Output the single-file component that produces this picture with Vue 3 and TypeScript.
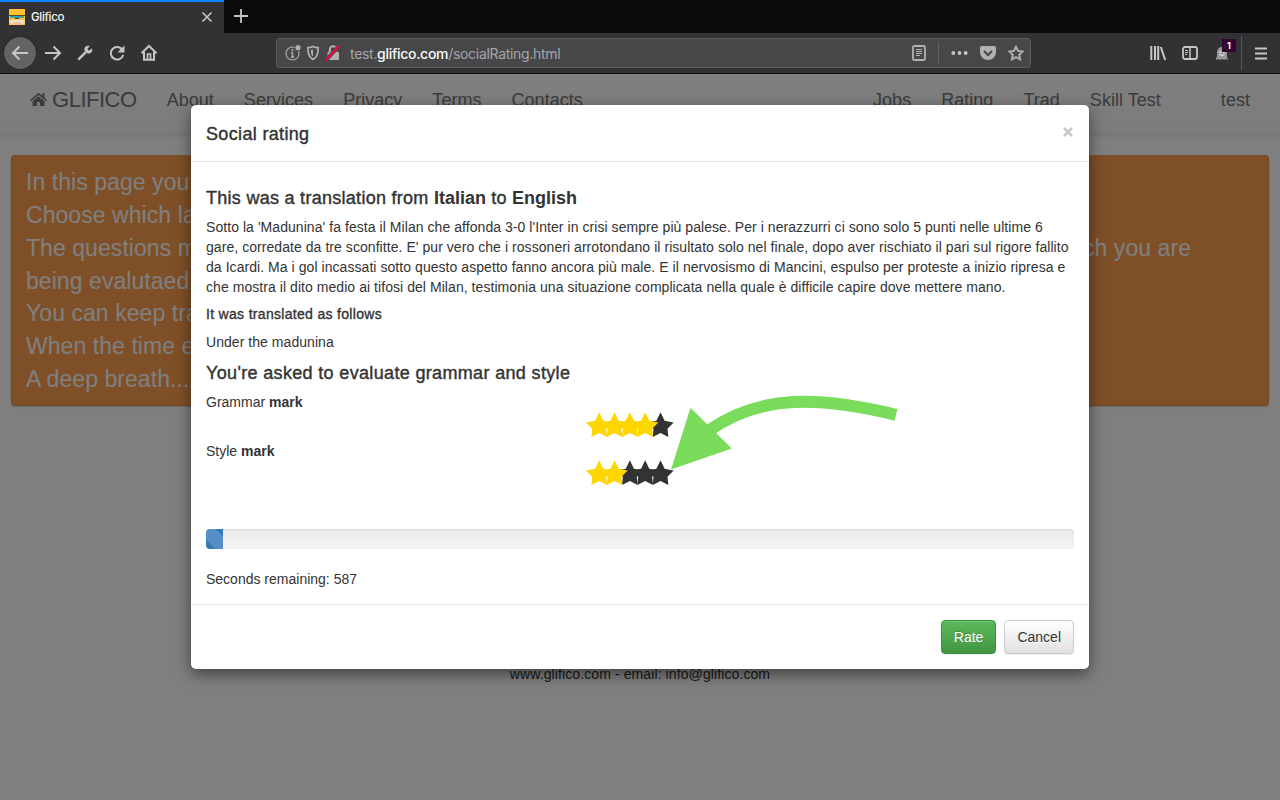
<script setup lang="ts">
interface Rating { label: string; value: number }

const leftLinks: string[] = ['About', 'Services', 'Privacy', 'Terms', 'Contacts']
const rightLinks: string[] = ['Jobs', 'Rating', 'Trad', 'Skill Test']
const ratings: Rating[] = [
  { label: 'Grammar', value: 4 },
  { label: 'Style', value: 2 },
]
const intro: string[][] = [
  ['In this page you'],
  ['Choose which la'],
  ['The questions m', 'ch you are'],
  ['being evalutaed'],
  ['You can keep tra'],
  ['When the time e'],
  ['A deep breath...'],
]
const progress = 2
// Unfilled stars come first so the gold ones overlap them.
const starOrder = [5, 4, 3, 2, 1]
</script>

<template>
  <div class="window">
    <header class="chrome">
      <div class="tabs">
        <div class="tab">
          <svg class="favicon" width="16" height="16" viewBox="0 0 16 16">
            <rect width="16" height="16" fill="#ffc233" />
            <rect y="6" width="16" height="1" fill="#594a25" />
            <rect x="1" y="7" width="14" height="2" fill="#35a39b" />
            <rect x="6" y="9" width="4" height="1" fill="#3b3024" />
            <path d="M0 12l2-1h4l2-1 2 1h4l2 1v2l-3 1H3l-3-2z" fill="#f2dfc9" />
            <rect x="4" y="13" width="8" height="3" fill="#f5bd9e" />
          </svg>
          <span class="tab-title">Glifico</span>
          <svg class="tab-close" width="12" height="12" viewBox="0 0 12 12"><path d="M1.500 1.500l9 9M10.500 1.500l-9 9" /></svg>
        </div>
        <svg class="new-tab" width="16" height="16" viewBox="0 0 16 16"><path d="M8 1v14M1 8h14" /></svg>
      </div>
      <div class="toolbar">
        <div class="nav-icons">
          <span class="back"><svg width="18" height="18" viewBox="0 0 18 18"><path d="M17 9H2M8.500 2.500L2 9l6.500 6.500" /></svg></span>
          <svg width="18" height="18" viewBox="0 0 18 18"><path d="M1 9h15M9.500 2.500L16 9l-6.500 6.500" /></svg>
          <svg width="18" height="18" viewBox="0 0 18 18"><path d="M2.300 15.700l7.500-7.500" stroke-width="2.400" /><path d="M13.800 2c-3.900-.8-6 1.500-5.100 4.900l2.400 2.400c3.600 1 5.800-1.200 4.900-5l-2.800 2.500-1.900-1.800z" fill="#c6c6c7" stroke="none" /></svg>
          <svg width="18" height="18" viewBox="0 0 18 18"><path d="M14.300 5.600A6.300 6.300 0 1 0 15.200 11" /><path d="M16.500 1.500v7h-7z" fill="#c6c6c7" stroke="none" /></svg>
          <svg width="18" height="18" viewBox="0 0 18 18"><path d="M1.500 9.200L9 2l7.500 7.200M4 8v7.800h10V8" /><path d="M7.500 15v-5h3v5" stroke-width="1.700" /></svg>
        </div>
        <div class="urlbar">
          <svg width="17" height="18" viewBox="0 0 17 18"><circle cx="7.500" cy="9.500" r="6.500" stroke-width="1.100" /><path d="M7.500 8.500v4.500M6 8.500h1.500M6 13h3.200" stroke-width="1.400" /><circle cx="7.500" cy="6" r="1.100" fill="#b1b1b3" stroke="none" /><circle cx="13" cy="3.700" r="3.200" fill="#b1b1b3" stroke="#474749" stroke-width="1" /></svg>
          <svg width="14" height="16" viewBox="0 0 14 16"><path d="M7 1.500c-1.700 1-3.300 1.200-5.200 1.200 0 5.500.7 9.300 5.200 11.800 4.500-2.500 5.200-6.300 5.200-11.800C10.300 2.700 8.700 2.500 7 1.500z" stroke-width="1.700" /><path d="M7 4.500c-1 .5-1.400.6-2.300.7.200 3.200.7 5 2.300 6.300z" fill="#b1b1b3" stroke="none" /></svg>
          <svg class="lock" width="16" height="18" viewBox="0 0 16 18"><path d="M4.800 8V5.500a3.200 3.200 0 0 1 6.400 0V8" stroke-width="2" /><rect x="2.500" y="8" width="11.500" height="8" rx="1" fill="#b1b1b3" stroke="none" /><path d="M1 16L14 2" stroke="#474749" stroke-width="4" /><path d="M1 16L14 2" stroke="#f7063d" stroke-width="2" /></svg>
          <span class="url">test.<b>glifico.com</b>/socialRating.html</span>
          <div class="page-actions">
            <svg width="14" height="16" viewBox="0 0 14 16"><rect x="1" y="1" width="12" height="14" rx="1.500" stroke-width="1.800" /><path d="M4 4.500h6M4 6.500h6M4 8.500h6M4 10.500h4" stroke-width="1" /></svg>
            <i class="separator"></i>
            <svg width="17" height="4" viewBox="0 0 17 4"><g fill="#c6c6c7" stroke="none"><circle cx="2.300" cy="2" r="1.900" /><circle cx="8.500" cy="2" r="1.900" /><circle cx="14.700" cy="2" r="1.900" /></g></svg>
            <svg width="16" height="16" viewBox="0 0 16 16"><path d="M2 1h12a2 2 0 0 1 2 2v4a8 8 0 0 1-16 0V3a2 2 0 0 1 2-2z" fill="#b1b1b3" stroke="none" /><path class="chevron" d="M4 6l4 4 4-4" /></svg>
            <svg width="16" height="16" viewBox="0 0 16 16"><path d="M8 1.600l2 4.300 4.700.6-3.500 3.200.9 4.700L8 12.100l-4.100 2.300.9-4.700-3.500-3.200 4.700-.6z" stroke-width="1.900" /></svg>
          </div>
        </div>
        <div class="extras">
          <svg width="16" height="16" viewBox="0 0 16 16"><path d="M1.300 1v14M5 1v14M8.200 1v14M10.800 2l4.400 13" /></svg>
          <svg width="16" height="16" viewBox="0 0 16 16"><rect x="1" y="2" width="14" height="12" rx="2" stroke-width="1.800" /><path d="M8 2v12" stroke-width="1.500" /><path d="M3 5.500h3M3 7.500h3M3 9.500h2" stroke-width="1" /></svg>
          <span class="ghost">
            <svg width="16" height="16" viewBox="0 0 16 16"><path d="M2 15V13l1-1V7a5 5 0 0 1 10 0v5l1 2v1l-2-1-2 1-2-1-2 1-2-1z" fill="#98989a" stroke="none" /><circle cx="6.300" cy="7" r="1" fill="#eee" stroke="none" /><circle cx="9.800" cy="7" r="1" fill="#eee" stroke="none" /><path d="M5.500 9.500q2.500 2 5 0" stroke="#eee" stroke-width="1" /></svg>
            <span class="count">1</span>
          </span>
          <i class="divider"></i>
          <svg class="menu" width="12" height="13" viewBox="0 0 12 13"><path d="M0 1.500h12M0 6.500h12M0 11.500h12" /></svg>
        </div>
      </div>
    </header>

    <main class="page">
      <nav class="navbar">
        <a class="brand">
          <svg width="17" height="15" viewBox="0 0 17 15"><path d="M8.500.7L0 8l1 1.300L8.500 3l7.500 6.300L17 8l-2.500-2.200V1.300h-2.300v2.500zM8.500 4.200l-6 5V14h4.600v-4h2.800v4h4.600V9.200z" /></svg>
          <span>GLIFICO</span>
        </a>
        <a v-for="l in leftLinks" :key="l">{{ l }}</a>
        <div class="nav-right">
          <a v-for="l in rightLinks" :key="l">{{ l }}</a>
          <a class="user">test</a>
        </div>
      </nav>
      <section class="intro">
        <div v-for="(line, i) in intro" :key="i" class="intro-line"><span v-for="part in line" :key="part">{{ part }}</span></div>
      </section>
      <footer class="page-footer">www.glifico.com - email: info@glifico.com</footer>

      <div class="backdrop">
        <div class="modal">
          <div class="modal-header">
            <h4>Social rating</h4>
            <svg width="10" height="10" viewBox="0 0 10 10"><path d="M1 1l8 8M9 1L1 9" /></svg>
          </div>
          <div class="modal-body">
            <h4 class="direction">This was a translation from <b>Italian</b> to <b>English</b></h4>
            <p class="source">
              <span>Sotto la 'Madunina' fa festa il Milan che affonda 3-0 l'Inter in crisi sempre più palese. Per i nerazzurri ci sono solo 5 punti nelle ultime 6</span>
              <span>gare, corredate da tre sconfitte. E' pur vero che i rossoneri arrotondano il risultato solo nel finale, dopo aver rischiato il pari sul rigore fallito</span>
              <span>da Icardi. Ma i gol incassati sotto questo aspetto fanno ancora più male. E il nervosismo di Mancini, espulso per proteste a inizio ripresa e</span>
              <span>che mostra il dito medio ai tifosi del Milan, testimonia una situazione complicata nella quale è difficile capire dove mettere mano.</span>
            </p>
            <h5>It was translated as follows</h5>
            <p class="translated">Under the madunina</p>
            <h4 class="ask">You're asked to evaluate grammar and style</h4>
            <div v-for="r in ratings" :key="r.label" class="rating">
              <div class="rating-label">{{ r.label }} <b>mark</b></div>
              <svg class="stars" width="88" height="26" viewBox="0 0 88 26">
                <path v-for="n in starOrder" :key="n" :class="{ on: n <= r.value }" :transform="`translate(${(n - 1) * 15.33} 0)`" d="M13.200.3L17.300 8.800L26.300 10.500L20.200 16.800L21 25L13.200 21.100L5.400 25L6.200 16.800L.1 10.500L9.100 8.800Z" />
              </svg>
            </div>
            <div class="progress"><div class="bar" :style="{ width: progress + '%' }"></div></div>
            <p class="remaining">Seconds remaining: 587</p>
          </div>
          <div class="modal-footer">
            <button class="rate">Rate</button>
            <button>Cancel</button>
          </div>
          <svg class="arrow" width="230" height="80" viewBox="670 392 230 80">
            <path d="M709 430.500C760 394 820 396.500 896 414.800" fill="none" stroke="#79dc5b" stroke-width="12" />
            <path d="M671 469.500L690.500 407.800L731.800 448.600Z" fill="#79dc5b" />
          </svg>
        </div>
      </div>
    </main>
  </div>
</template>

<style>
body { margin: 0; overflow: hidden; }
</style>

<style scoped>
.window { width: 1280px; height: 800px; display: flex; flex-direction: column; font: 14px/20px "Liberation Sans", Arial, sans-serif; color: #333; }
h4, h5, p { margin: 0; }
.chrome svg { fill: none; stroke: #c6c6c7; stroke-width: 2; flex: none; }
.chrome .favicon { stroke: none; }
.chrome { height: 74px; flex: none; background: #323234; box-sizing: border-box; border-bottom: 1px solid #0c0c0d; }
.tabs { height: 33px; background: #0b0b0c; display: flex; align-items: center; }
.tab { width: 224px; height: 33px; box-sizing: border-box; border-top: 2px solid #0a84ff; background: #323234; display: flex; align-items: center; padding: 0 11px 2px 9px; }
.tab-title { margin-left: 6px; font: 500 11.500px/16px Inter, sans-serif; letter-spacing: -.3px; color: #f9f9fa; flex: 1; }
.chrome .tab-close { stroke-width: 1.600; }
.new-tab { margin: 0 0 2px 9px; }
.chrome .new-tab { stroke-width: 1.800; }
.toolbar { height: 40px; display: flex; align-items: center; }
.nav-icons { display: flex; align-items: center; gap: 14px; width: 272px; padding-left: 4px; }
.nav-icons .back { width: 32px; height: 32px; border-radius: 50%; background: #636365; display: flex; align-items: center; justify-content: center; margin-right: -6px; box-shadow: 0 0 0 1px #29292b; }
.urlbar { width: 755px; height: 30px; box-sizing: border-box; border: 1px solid #5b5b5d; border-radius: 3px; background: #474749; display: flex; align-items: center; padding: 0 6px 0 8px; gap: 4px; }
.urlbar svg { stroke: #b1b1b3; }
.urlbar .chevron { stroke: #474749; }
.urlbar .lock { margin-left: 1px; }
.url { font: 14px/20px Inter, sans-serif; color: #a5a5a8; margin: 2px 0 0 5px; flex: 1; letter-spacing: -.3px; white-space: nowrap; }
.url b { color: #f9f9fa; font-weight: 500; }
.page-actions { display: flex; align-items: center; gap: 12px; }
.separator { width: 1px; height: 22px; background: #616163; }
.extras { flex: 1; display: flex; align-items: center; padding-left: 119px; gap: 16px; }
.ghost { position: relative; height: 16px; }
.ghost svg { display: block; }
.count { position: absolute; left: 8px; top: -6px; width: 14px; height: 13px; background: #33052f; color: #fff; font: 700 9px/13px Inter, sans-serif; text-align: center; }
.divider { width: 1px; height: 34px; background: #59595b; margin-left: -5px; }
.menu { margin-left: -3px; }
.page { position: relative; flex: 1; background: #fff; overflow: hidden; }
.navbar { height: 61px; display: flex; align-items: center; box-sizing: border-box; padding: 0 30px 9px; gap: 30px; background: linear-gradient(#fff, #f8f8f8); border-bottom: 1px solid #e7e7e7; box-shadow: 0 1px 5px rgba(0,0,0,.08); font-size: 18px; letter-spacing: .03px; color: #777; }
.brand { display: flex; align-items: center; gap: 5px; font-size: 22px; letter-spacing: -.48px; }
.brand svg { fill: #777; }
.nav-right { margin-left: auto; display: flex; gap: 30px; }
.user { margin-left: 30px; }
.intro { height: 251px; box-sizing: border-box; margin: 20px 11px 0; padding: 11px 14px; border-radius: 4px; background: #ffa050; border: 1px solid #e99048; border-top-width: 0; color: #fff; font-size: 23px; line-height: 32.860px; letter-spacing: .06px; box-shadow: 0 1px 2px rgba(0,0,0,.15); }
.intro-line { display: flex; justify-content: space-between; padding-right: 63px; white-space: nowrap; }
.page-footer { text-align: center; margin-top: 258px; letter-spacing: .1px; }
.backdrop { position: absolute; inset: 0; background: rgba(0,0,0,.5); display: flex; justify-content: center; align-items: flex-start; padding-top: 31px; }
.modal { position: relative; width: 898px; height: 564px; background: #fff; border-radius: 5px; box-shadow: 0 5px 15px rgba(0,0,0,.5); display: flex; flex-direction: column; }
.modal-header { height: 57px; box-sizing: border-box; border-bottom: 1px solid #e5e5e5; display: flex; justify-content: space-between; align-items: flex-start; padding: 19px 16px 0 15px; }
.modal-header svg { margin-top: 3px; fill: none; stroke: #c8c8c8; stroke-width: 2.600; }
h4 { font-size: 18px; line-height: 20px; font-weight: 400; letter-spacing: .34px; -webkit-text-stroke: .4px #333; white-space: nowrap; }
h4 b { -webkit-text-stroke: 0; letter-spacing: 0; }
.direction { letter-spacing: .28px; }
.modal-body { height: 442px; box-sizing: border-box; padding: 26px 15px 0; }
.source { margin-top: 9px; white-space: nowrap; letter-spacing: .057px; }
.source span { display: block; width: max-content; }
h5 { font-size: 14px; line-height: 20px; margin-top: 7px; font-weight: 400; letter-spacing: .31px; -webkit-text-stroke: .35px #333; }
.translated { margin-top: 8px; letter-spacing: .05px; }
.ask { margin-top: 11px; }
.rating { height: 49px; }
.ask + .rating { margin-top: 9px; }
.rating-label { height: 20px; }
.stars { display: block; margin: 0 0 0 380px; overflow: visible; fill: #333; }
.stars .on { fill: #ffd700; }
.rating + .rating .stars { margin-top: -1px; }
.progress { margin-top: 39px; height: 20px; border-radius: 4px; overflow: hidden; background: linear-gradient(#ebebeb, #f5f5f5); box-shadow: inset 0 1px 2px rgba(0,0,0,.1); }
.bar { height: 20px; background: linear-gradient(45deg, #337ab7 25%, #5490c5 25%, #5490c5 80%, #337ab7 80%); }
.remaining { margin-top: 20px; }
.modal-footer { flex: 1; border-top: 1px solid #e5e5e5; display: flex; justify-content: flex-end; align-items: flex-start; gap: 8px; padding: 15px 15px 0; }
button { height: 34px; box-sizing: border-box; padding: 0 12px; border: 1px solid #ccc; border-radius: 4px; background: linear-gradient(#fff, #e0e0e0); font: 14px/20px "Liberation Sans", Arial, sans-serif; color: #333; text-shadow: 0 1px 0 #fff; box-shadow: inset 0 1px 0 rgba(255,255,255,.15), 0 1px 1px rgba(0,0,0,.075); }
.rate { background: linear-gradient(#5cb85c, #419641); border-color: #3e8f3e; color: #fff; text-shadow: 0 -1px 0 rgba(0,0,0,.2); }
.arrow { position: absolute; left: 479px; top: 287px; }
</style>
